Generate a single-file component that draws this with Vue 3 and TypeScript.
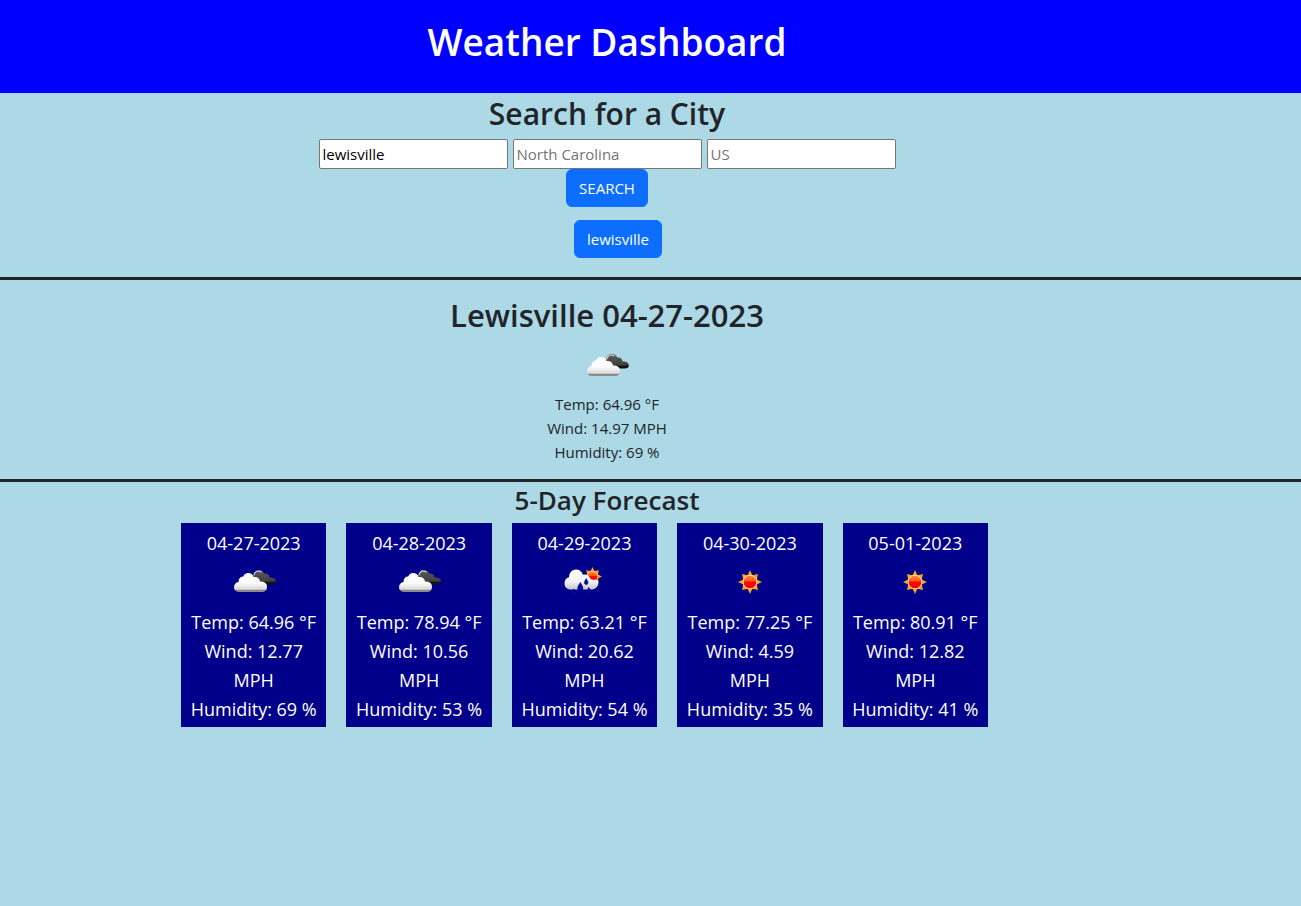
<script setup lang="ts">
import { ref } from 'vue'

type Sky = 'clouds' | 'rain' | 'sun'

interface Day {
  date: string
  sky: Sky
  temp: string
  wind: string
  humidity: number
}

const city = ref('lewisville')
const region = ref('')
const country = ref('')
const history = ref<string[]>(['lewisville'])

const today: Day = { date: '04-27-2023', sky: 'clouds', temp: '64.96', wind: '14.97', humidity: 69 }

const forecast: Day[] = [
  { date: '04-27-2023', sky: 'clouds', temp: '64.96', wind: '12.77', humidity: 69 },
  { date: '04-28-2023', sky: 'clouds', temp: '78.94', wind: '10.56', humidity: 53 },
  { date: '04-29-2023', sky: 'rain', temp: '63.21', wind: '20.62', humidity: 54 },
  { date: '04-30-2023', sky: 'sun', temp: '77.25', wind: '4.59', humidity: 35 },
  { date: '05-01-2023', sky: 'sun', temp: '80.91', wind: '12.82', humidity: 41 }
]

function search() {
  const name = city.value.trim()
  if (name && !history.value.includes(name)) history.value.push(name)
}
</script>

<template>
  <div class="page">
    <svg class="defs" width="0" height="0" aria-hidden="true">
      <defs>
        <linearGradient id="white-cloud" x1="0" y1="0" x2="0" y2="1">
          <stop offset="0" stop-color="#ffffff" />
          <stop offset="0.55" stop-color="#fafafa" />
          <stop offset="0.86" stop-color="#d8d8d8" />
          <stop offset="0.9" stop-color="#858585" />
          <stop offset="1" stop-color="#8f8f8f" />
        </linearGradient>
        <linearGradient id="dark-cloud" x1="0" y1="0" x2="0" y2="1">
          <stop offset="0" stop-color="#5c5c5c" />
          <stop offset="0.75" stop-color="#414141" />
          <stop offset="0.85" stop-color="#151515" />
          <stop offset="1" stop-color="#111111" />
        </linearGradient>
        <linearGradient id="rain-cloud" x1="0" y1="0" x2="0" y2="1">
          <stop offset="0" stop-color="#ffffff" />
          <stop offset="0.6" stop-color="#f4f4f4" />
          <stop offset="1" stop-color="#c4c4cc" />
        </linearGradient>
        <linearGradient id="sun-core" x1="0" y1="0" x2="0" y2="1">
          <stop offset="0" stop-color="#ff8a3a" />
          <stop offset="0.42" stop-color="#ff5a1c" />
          <stop offset="0.5" stop-color="#ff0800" />
          <stop offset="1" stop-color="#f80000" />
        </linearGradient>
        <symbol id="sky-clouds" viewBox="0 0 50 50">
          <path fill="url(#dark-cloud)" d="M24 20c0-5 2-8 5.500-8 3 0 5 1.400 5.700 3.600 3-.5 5.200 1.200 5.400 4 3.300-.2 6.300 1.200 6.300 3.700 0 2.300-1.700 3.200-4 3.200H30z" />
          <path fill="none" stroke="#c8c8c8" stroke-width="1.200" d="M24.800 17.500c.6-2.900 2.200-4.400 4.600-4.400 1.300 0 2.200.4 3 1.100" />
          <path fill="url(#white-cloud)" d="M9.500 34C6.700 34 5 32 5 29.300c0-2.900 1.800-4.900 4.600-5.300-.2-3.600 2-5.500 4.700-5.500.7-2.200 2.400-3.600 4.700-3.600 2.800 0 4.800 1.500 5.600 4.100 3.400-.6 6 1.200 6.500 4.600 3.900-.1 6.900 1.600 6.900 5.100 0 3.300-2 5.300-5 5.300z" />
        </symbol>
        <symbol id="sun-shape" viewBox="0 0 24 24">
          <path fill="#ffa01e" d="M12 0l2.400 5.200 5.600-1.200-1.200 5.600L24 12l-5.200 2.400 1.200 5.600-5.600-1.200L12 24l-2.400-5.200L4 20l1.200-5.600L0 12l5.200-2.400L4 4l5.600 1.200z" />
          <circle cx="12" cy="12" r="6.800" fill="url(#sun-core)" stroke="#ffe0a0" stroke-width="1" />
        </symbol>
        <symbol id="sky-sun" viewBox="0 0 50 50">
          <use href="#sun-shape" x="13" y="12" width="24" height="24" />
        </symbol>
        <symbol id="sky-rain" viewBox="0 0 50 50">
          <use href="#sun-shape" x="24" y="9" width="19" height="19" />
          <path fill="url(#rain-cloud)" d="M11.500 31.500C8 31.500 5.500 29 5.500 25.500c0-3.500 1.700-5.600 4.500-6.300.2-4.700 3-7.700 7-7.700 3.500 0 6 2 6.800 5.200 4-.6 7 .9 7.900 4.600 1.200-.3 2 .1 2.600.8 1.600-1 3.400-.8 4.500.6 1 1.500.6 3.700-.2 5.200C37.200 30.400 34.500 31.500 31 31.500z" />
          <g fill="#0505b4" stroke="#00005c" stroke-width="0.600">
            <path d="M21.300 24.500c1.200 2.300 2.600 3.800 2.600 5.700a2.600 2.600 0 0 1-5.200 0c0-1.900 1.400-3.400 2.600-5.700z" />
            <path d="M27.200 20.500c.8 1.900 1.800 2.900 1.800 4.200a1.800 1.800 0 0 1-3.600 0c0-1.300 1-2.300 1.800-4.200z" />
            <path d="M14.800 31c1.100 2 2.300 3.100 2.300 4.700a2.300 2.300 0 0 1-4.600 0c0-1.600 1.200-2.700 2.300-4.700z" />
            <path d="M29.800 29.500c1 2 2.100 3.100 2.100 4.500a2.100 2.100 0 0 1-4.200 0c0-1.400 1.100-2.500 2.100-4.500z" />
          </g>
        </symbol>
      </defs>
    </svg>

    <header class="banner">
      <h1>Weather Dashboard</h1>
    </header>

    <section class="search">
      <h2>Search for a City</h2>
      <form @submit.prevent="search">
        <div class="fields">
          <input v-model="city" type="text" aria-label="City" placeholder="City" />
          <input v-model="region" type="text" aria-label="State" placeholder="North Carolina" />
          <input v-model="country" type="text" aria-label="Country" placeholder="US" />
        </div>
        <button class="btn" type="submit">SEARCH</button>
      </form>
      <div class="history">
        <button v-for="name in history" :key="name" class="btn" type="button" @click="city = name">{{ name }}</button>
      </div>
    </section>

    <section class="today">
      <h2>Lewisville {{ today.date }}</h2>
      <svg class="sky" aria-hidden="true"><use :href="`#sky-${today.sky}`" /></svg>
      <p>Temp: {{ today.temp }} °F</p>
      <p>Wind: {{ today.wind }} MPH</p>
      <p>Humidity: {{ today.humidity }} %</p>
    </section>

    <section class="forecast">
      <h3>5-Day Forecast</h3>
      <div class="cards">
        <article v-for="day in forecast" :key="day.date" class="card">
          <p>{{ day.date }}</p>
          <svg class="sky" aria-hidden="true"><use :href="`#sky-${day.sky}`" /></svg>
          <p>Temp: {{ day.temp }} °F</p>
          <p>Wind: {{ day.wind }} MPH</p>
          <p>Humidity: {{ day.humidity }} %</p>
        </article>
      </div>
    </section>
  </div>
</template>

<style>
body {
  margin: 0;
  background: #add8e6;
}
</style>

<style scoped>
.page {
  font-family: "Segoe UI", "Open Sans", "Noto Sans", sans-serif;
  font-size: 15px;
  line-height: 24px;
  color: #212529;
  text-align: center;
}
.defs {
  position: absolute;
}
h1,
h2,
h3,
p {
  margin: 0;
}
h1,
h2,
h3 {
  font-weight: 600;
}
.banner,
.search,
.today,
.forecast {
  padding-right: 87px;
}
.banner {
  padding-top: 18px;
  padding-bottom: 27px;
  background: #0000ff;
  color: #ffffff;
}
h1 {
  font-size: 37px;
  line-height: 48px;
}
h2 {
  margin-bottom: 6px;
  font-size: 30px;
  line-height: 38px;
}
h3 {
  margin-bottom: 6px;
  font-size: 26px;
  line-height: 33px;
}
.search {
  padding-top: 2px;
  padding-bottom: 19px;
  border-bottom: 3px solid #212529;
}
.fields {
  display: flex;
  justify-content: center;
  gap: 5px;
}
input {
  box-sizing: border-box;
  width: 189px;
  height: 30px;
  padding: 1px 3px;
  border: 1px solid #767676;
  border-radius: 2px;
  background: #ffffff;
  color: #000000;
  font: inherit;
}
input::placeholder {
  color: #757575;
}
.btn {
  display: block;
  padding: 6px 12px;
  border: 1px solid #0d6efd;
  border-radius: 6px;
  background: #0d6efd;
  color: #ffffff;
  font: inherit;
  cursor: pointer;
}
form .btn {
  margin: 0 auto;
}
.history {
  display: flex;
  flex-wrap: wrap;
  justify-content: center;
  gap: 12px;
  padding: 13px 0 0 22px;
}
.today {
  padding-top: 16px;
  padding-bottom: 15px;
  border-bottom: 3px solid #212529;
}
.today h2 {
  margin-bottom: 8px;
  font-size: 31px;
}
.sky {
  display: block;
  width: 50px;
  height: 50px;
  margin: 0 auto;
}
.forecast {
  padding-top: 2px;
}
.cards {
  display: grid;
  grid-template-columns: repeat(5, 1fr);
  gap: 20px;
  width: 62%;
  min-width: 807px;
  margin-left: 181px;
}
.card {
  padding: 6px 8px 3px;
  background: #00008b;
  color: #ffffff;
  font-size: 18px;
  line-height: 29px;
}
</style>
